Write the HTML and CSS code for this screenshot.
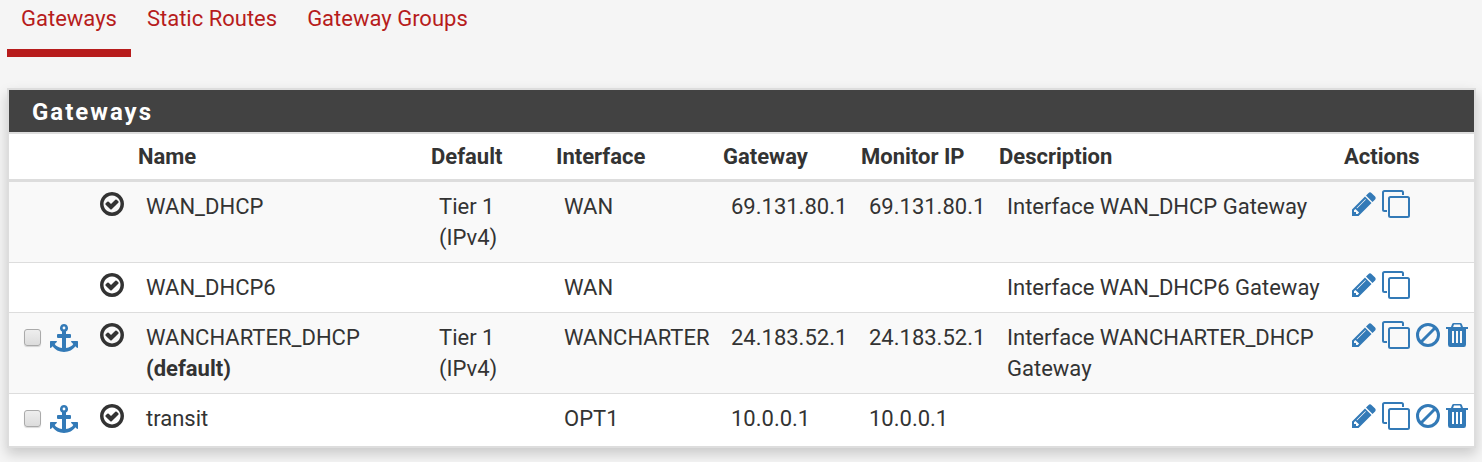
FILE: index.html
```html
<!DOCTYPE html>
<html lang="en">
<head>
<meta charset="utf-8">
<title>Gateways</title>
<link rel="stylesheet" href="styles.css">
</head>
<body>
<svg class="sprite" aria-hidden="true">
  <symbol id="i-check" viewBox="128 128 1536 1536"><path d="M1299 813l-422 422q-19 19-45 19t-45-19l-294-294q-19-19-19-45t19-45l102-102q19-19 45-19t45 19l147 147 275-275q19-19 45-19t45 19l102 102q19 19 19 45t-19 45zm141 83q0-148-73-273t-198-198-273-73-273 73-198 198-73 273 73 273 198 198 273 73 273-73 198-198 73-273zm224 0q0 209-103 385.500t-279.500 279.500-385.500 103-385.500-103-279.500-279.500-103-385.500 103-385.500 279.500-279.500 385.500-103 385.500 103 279.500 279.500 103 385.500z"/></symbol>
  <symbol id="i-pencil" viewBox="128 128 1536 1536"><path d="M491 1536l91-91-235-235-91 91v107h128v128h107zm523-928q0-22-22-22-10 0-17 7l-542 542q-7 7-7 17 0 22 22 22 10 0 17-7l542-542q7-7 7-17zm-54-192l416 416-832 832h-416v-416zm683 96q0 53-37 90l-166 166-416-416 166-165q36-38 90-38 53 0 91 38l235 234q37 39 37 91z"/></symbol>
  <symbol id="i-clone" viewBox="0 0 28 28"><path fill="none" stroke="currentColor" stroke-width="2" d="M5 21H2.500Q1 21 1 19.500V2.500Q1 1 2.500 1H19.500Q21 1 21 2.500V5M8.500 7H25.500Q27 7 27 8.500V25.500Q27 27 25.500 27H8.500Q7 27 7 25.500V8.500Q7 7 8.500 7Z"/></symbol>
  <symbol id="i-ban" viewBox="0 0 24 24"><g fill="none" stroke="currentColor" stroke-width="3"><circle cx="12" cy="12" r="10.500"/><path d="M4.800 19.200L19.200 4.800"/></g></symbol>
  <symbol id="i-trash" viewBox="0 0 22 24"><path fill-rule="evenodd" d="M7.700 0h6.600q1.200 0 1.600 1L17 4h5v2h-2v15.500q0 2.500-2.200 2.500H4.200q-2.200 0-2.200-2.500V6H0V4h5l1.100-3q0.400-1 1.600-1zM8 1.500L7.100 4h7.800L14 1.500zM6 8v12h2V8zM10 8v12h2V8zM14 8v12h2V8z"/></symbol>
  <symbol id="i-anchor" viewBox="0 0 28 28"><path fill-rule="evenodd" d="M14 0a4 4 0 0 1 2 7.460V10h4q1 0 1 1v2q0 1-1 1h-4v10.100c3.400-.5 6.200-2.100 7.300-4.100l-2.100-2.100q-.6-.9.500-.9H27.300q.7 0 .7.700v5.600q-.2 1.100-1.100.5l-1.600-1.500C23.200 25.800 18.800 28 14 28S4.800 25.800 2.700 22.300l-1.600 1.500Q.2 24.400 0 23.300v-5.600Q0 17 .7 17h5.600q1.100 0 .5.900L4.700 20c1.100 2 3.900 3.600 7.300 4.100V14H8q-1 0-1-1v-2q0-1 1-1h4V7.460A4 4 0 0 1 14 0zM14 2.600a1.400 1.400 0 1 0 0 2.800a1.400 1.400 0 0 0 0-2.800z"/></symbol>
</svg>
<nav class="tabs">
  <a class="tab active" href="#gateways" aria-current="page">Gateways</a>
  <a class="tab" href="#routes">Static Routes</a>
  <a class="tab" href="#groups">Gateway Groups</a>
</nav>
<section class="panel">
  <h2 class="panel-title">Gateways</h2>
  <table class="gateways">
    <colgroup>
      <col class="c-select"><col class="c-status"><col class="c-name"><col class="c-default"><col class="c-interface"><col class="c-ip"><col class="c-ip"><col><col class="c-actions">
    </colgroup>
    <thead>
      <tr><th></th><th></th><th>Name</th><th>Default</th><th>Interface</th><th>Gateway</th><th>Monitor IP</th><th>Description</th><th>Actions</th></tr>
    </thead>
    <tbody>
      <tr>
        <td></td>
        <td><svg class="icon status"><use href="#i-check"/></svg></td>
        <td>WAN_DHCP</td><td>Tier 1 (IPv4)</td><td>WAN</td><td>69.131.80.1</td><td>69.131.80.1</td><td>Interface WAN_DHCP Gateway</td>
        <td><div class="actions">
          <a href="#edit" aria-label="Edit"><svg class="icon"><use href="#i-pencil"/></svg></a>
          <a href="#copy" aria-label="Copy"><svg class="icon large"><use href="#i-clone"/></svg></a>
        </div></td>
      </tr>
      <tr>
        <td></td>
        <td><svg class="icon status"><use href="#i-check"/></svg></td>
        <td>WAN_DHCP6</td><td></td><td>WAN</td><td></td><td></td><td>Interface WAN_DHCP6 Gateway</td>
        <td><div class="actions">
          <a href="#edit" aria-label="Edit"><svg class="icon"><use href="#i-pencil"/></svg></a>
          <a href="#copy" aria-label="Copy"><svg class="icon large"><use href="#i-clone"/></svg></a>
        </div></td>
      </tr>
      <tr>
        <td><div class="select"><input class="tick" type="checkbox" aria-label="Select WANCHARTER_DHCP"><a href="#move" aria-label="Move"><svg class="icon large"><use href="#i-anchor"/></svg></a></div></td>
        <td><svg class="icon status"><use href="#i-check"/></svg></td>
        <td>WANCHARTER_DHCP <strong>(default)</strong></td><td>Tier 1 (IPv4)</td><td>WANCHARTER</td><td>24.183.52.1</td><td>24.183.52.1</td><td>Interface WANCHARTER_DHCP Gateway</td>
        <td><div class="actions">
          <a href="#edit" aria-label="Edit"><svg class="icon"><use href="#i-pencil"/></svg></a>
          <a href="#copy" aria-label="Copy"><svg class="icon large"><use href="#i-clone"/></svg></a>
          <a href="#disable" aria-label="Disable"><svg class="icon"><use href="#i-ban"/></svg></a>
          <a href="#delete" aria-label="Delete"><svg class="icon narrow"><use href="#i-trash"/></svg></a>
        </div></td>
      </tr>
      <tr>
        <td><div class="select"><input class="tick" type="checkbox" aria-label="Select transit"><a href="#move" aria-label="Move"><svg class="icon large"><use href="#i-anchor"/></svg></a></div></td>
        <td><svg class="icon status"><use href="#i-check"/></svg></td>
        <td>transit</td><td></td><td>OPT1</td><td>10.0.0.1</td><td>10.0.0.1</td><td></td>
        <td><div class="actions">
          <a href="#edit" aria-label="Edit"><svg class="icon"><use href="#i-pencil"/></svg></a>
          <a href="#copy" aria-label="Copy"><svg class="icon large"><use href="#i-clone"/></svg></a>
          <a href="#disable" aria-label="Disable"><svg class="icon"><use href="#i-ban"/></svg></a>
          <a href="#delete" aria-label="Delete"><svg class="icon narrow"><use href="#i-trash"/></svg></a>
        </div></td>
      </tr>
    </tbody>
  </table>
</section>
</body>
</html>
```
FILE: styles.css
```css
* { box-sizing: border-box; }
body {
  margin: 0;
  padding: 0 6px 14px 7px;
  background: #f5f5f5;
  color: #333;
  font: 400 22px/31px Roboto, sans-serif;
}
.sprite { display: none; }
.tabs { display: flex; gap: 2px; margin-bottom: 31px; }
.tab {
  padding: 3px 14px 15px;
  border-bottom: 8px solid transparent;
  color: #b71c1c;
  text-decoration: none;
}
.tab.active { border-color: #b71c1c; }
.panel {
  padding-bottom: 3px;
  background: #fff;
  border: 2px solid #ddd;
  box-shadow: 0 6px 12px rgba(0, 0, 0, .18);
}
.panel-title {
  margin: 0;
  padding: 7px 23px 4px;
  background: #424242;
  border-bottom: 2px solid #ddd;
  color: #fff;
  font-size: 24px;
  font-weight: 700;
  letter-spacing: 2px;
}
.gateways { width: 100%; table-layout: fixed; border-collapse: separate; border-spacing: 0; }
.c-select { width: 82px; }
.c-status { width: 47px; }
.c-name { width: 20%; }
.c-default { width: 125px; }
.c-interface { width: 167px; }
.c-ip { width: 138px; }
.c-actions { width: 130px; }
th {
  padding: 7px 0;
  border-bottom: 3px solid #ddd;
  text-align: left;
  font-weight: 700;
}
td { padding: 9px 8px; border-bottom: 1px solid #ddd; vertical-align: top; }
td:last-child { padding-right: 0; }
tbody tr:nth-child(odd) { background: #f9f9f9; }
tbody tr:last-child td { border-bottom: 0; }
.icon { display: block; width: 24px; height: 24px; fill: currentColor; }
.large { width: 28px; height: 28px; }
.narrow { width: 22px; }
.status { margin-top: 1px; margin-left: 1px; }
.actions, .select { display: flex; align-items: center; height: 28px; color: #337ab7; }
.actions a, .select a { color: inherit; }
.actions { gap: 6px; margin-top: -1px; }
.select { gap: 9px; padding-left: 7px; margin-top: 2px; }
.tick {
  appearance: none;
  width: 17px;
  height: 17px;
  margin: 0 0 2px;
  border: 1px solid #aaa;
  border-radius: 3px;
  background: linear-gradient(#eee, #dcdcdc);
  box-shadow: 0 1px 1px rgba(0, 0, 0, .15);
}
```
